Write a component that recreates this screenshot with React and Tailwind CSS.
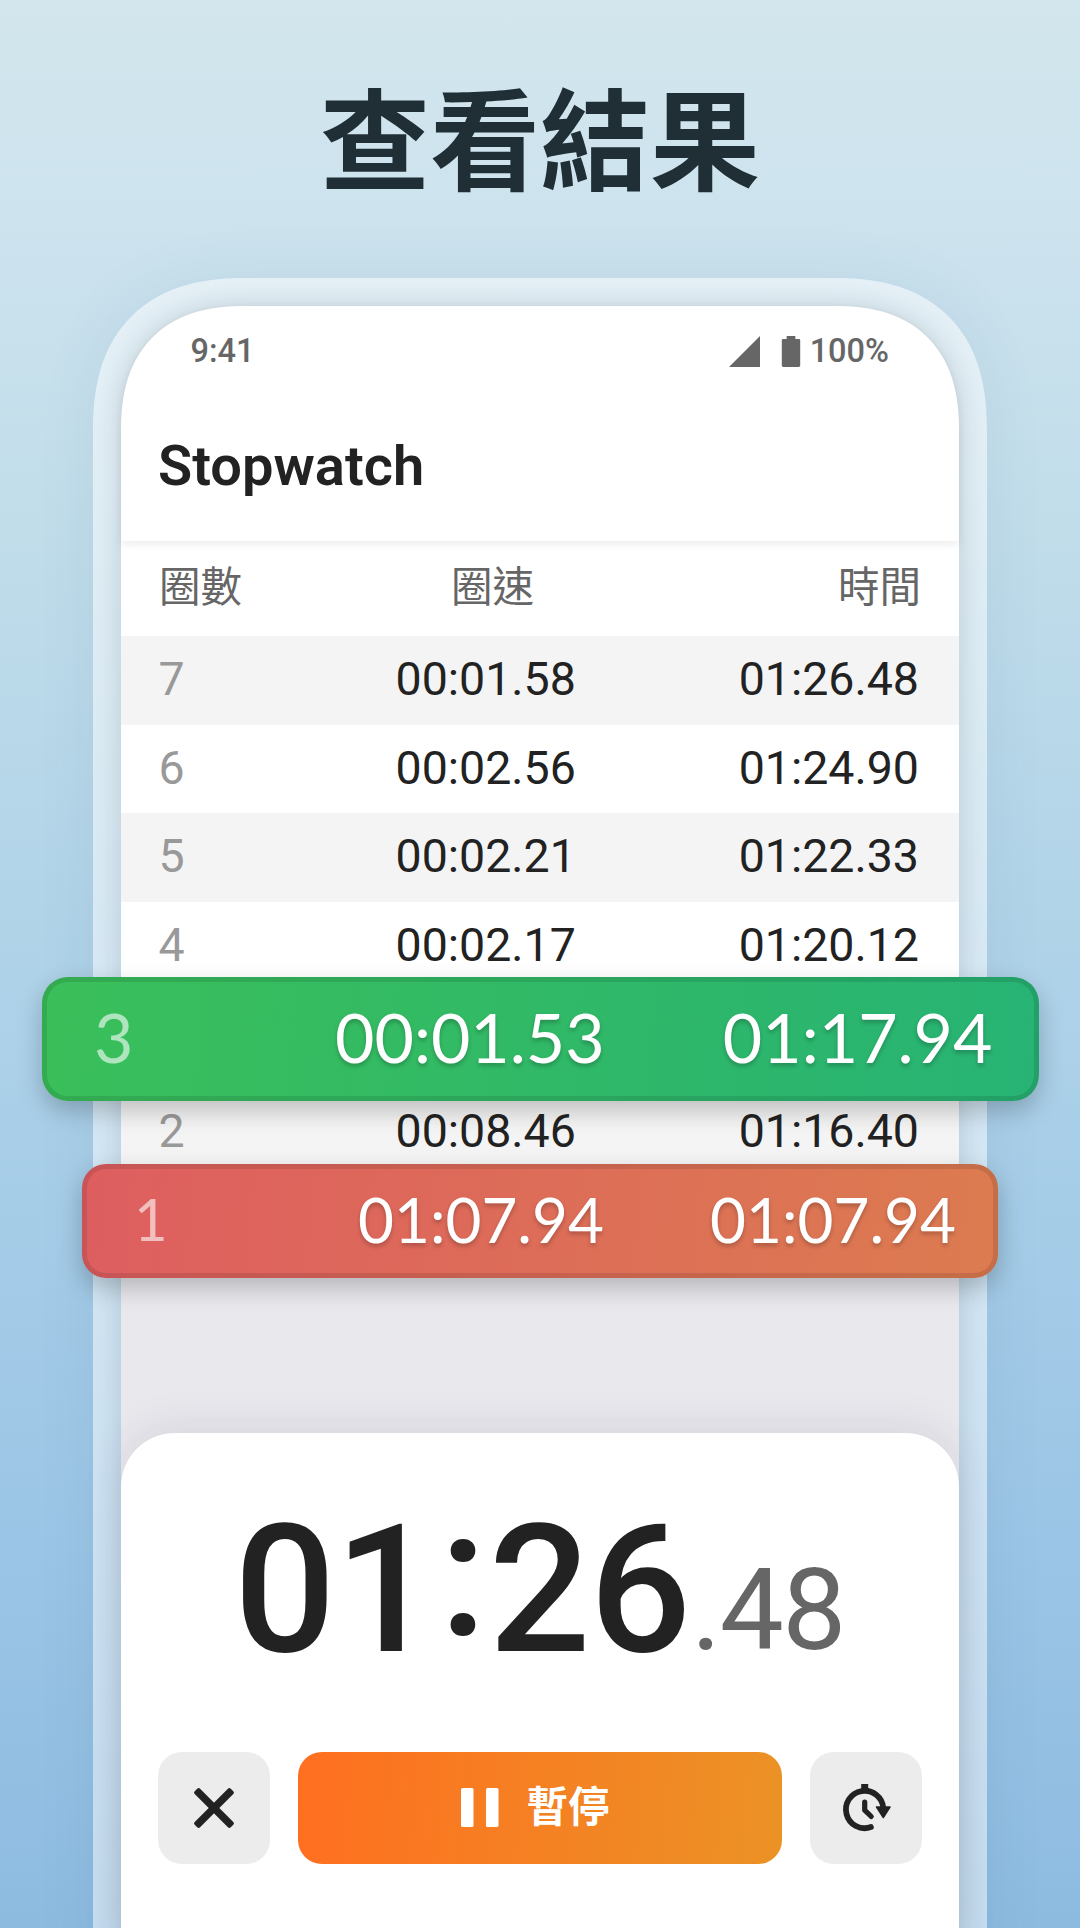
const laps = [
  { lap: "7", pace: "00:01.58", time: "01:26.48", tint: true },
  { lap: "6", pace: "00:02.56", time: "01:24.90", tint: false },
  { lap: "5", pace: "00:02.21", time: "01:22.33", tint: true },
  { lap: "4", pace: "00:02.17", time: "01:20.12", tint: false },
];

function LapRow({ lap, pace, time, tint }) {
  return (
    <div
      className={`flex h-[88.5px] items-center pb-[2px] pl-[37.500px] pr-[40px] text-[46.500px] leading-none text-[#222] ${
        tint ? "bg-[#f4f4f4]" : "bg-white"
      }`}
    >
      <span className="w-[237px] text-[#999]">{lap}</span>
      <span>{pace}</span>
      <span className="ml-auto">{time}</span>
    </div>
  );
}

function StatusBar() {
  return (
    <div className="flex h-[90px] items-center pl-[69.500px] pr-[70px] text-[32.500px] font-medium leading-none text-[#666]">
      <span className="pt-px">9:41</span>
      <svg className="ml-auto h-[31px] w-[31px]" viewBox="0 0 32 32" fill="#666">
        <path d="M32 0v32H0z" />
      </svg>
      <svg className="ml-[21px] h-[31px] w-5" viewBox="0 0 20 32" fill="#666">
        <path d="M5.500 0h9v3H18a1.500 1.500 0 0 1 1.500 1.500v26A1.500 1.500 0 0 1 18 32H2a1.500 1.500 0 0 1-1.500-1.500v-26A1.500 1.500 0 0 1 2 3h3.500z" />
      </svg>
      <span className="ml-[9px] pt-px">100%</span>
    </div>
  );
}

export default function App() {
  return (
    <div className="flex h-[1928px] w-[1080px] flex-col items-center overflow-hidden bg-[linear-gradient(180deg,#d3e6ed_0%,#cbe2ee_14%,#c1ddea_27%,#a9cfe8_58%,#9bc5e6_80%,#8dbbe0_100%)] font-[Roboto,'Noto_Sans_CJK_TC',sans-serif]">
      <h1 className="flex h-[278px] shrink-0 items-start pt-[65px] text-[110px] font-bold leading-[160px] text-[#202f36]">
        查看結果
      </h1>

      <div className="h-[1700px] w-[894px] shrink-0 rounded-t-[153px] bg-[#ffffff80] p-[28px] shadow-[0_0_60px_rgba(40,80,120,0.08)] [corner-shape:superellipse(1.26)]">
        <div className="flex h-full flex-col rounded-t-[125px] bg-[#e8e8ed] shadow-[0_0_28px_rgba(60,80,100,0.22)] [corner-shape:superellipse(1.26)]">
          <div className="relative h-[235px] shrink-0 rounded-t-[125px] bg-white shadow-[0_3px_8px_rgba(0,0,0,0.08)] [corner-shape:superellipse(1.26)]">
            <StatusBar />
            <div className="pl-[37px] pt-[37px] text-[56px] font-semibold leading-[66px] text-[#222]">
              Stopwatch
            </div>
          </div>

          <div className="flex h-[95px] shrink-0 items-center bg-white pb-[2px] pl-[38px] pr-[38px] text-[41.500px] leading-none text-[#666]">
            <span className="w-[292px]">圈數</span>
            <span>圈速</span>
            <span className="ml-auto">時間</span>
          </div>

          {laps.map((l) => (
            <LapRow key={l.lap} {...l} />
          ))}

          <div className="relative z-10 -mx-[79.500px] -mt-[13.500px] flex h-[124.500px] shrink-0 items-center rounded-[26px] border-[5px] border-black/10 bg-[linear-gradient(95deg,#3abf5a,#27b374)] bg-origin-border pb-[3px] pl-[47.500px] pr-[41px] font-[Lato,sans-serif] text-[68px] leading-none text-white shadow-[0_10px_24px_rgba(0,0,0,0.22)]">
            <span className="w-[241px] text-white/60">3</span>
            <span className="[text-shadow:0_3px_4px_rgba(0,0,0,0.22)]">00:01.53</span>
            <span className="ml-auto [text-shadow:0_3px_4px_rgba(0,0,0,0.22)]">01:17.94</span>
          </div>

          <div className="-mt-[13px] shrink-0">
            <LapRow lap="2" pace="00:08.46" time="01:16.40" tint />
          </div>

          <div className="relative z-10 -mx-[39px] -mt-[12.500px] flex h-[114px] shrink-0 items-center rounded-[24px] border-[5px] border-black/10 bg-[linear-gradient(95deg,#de5e60,#dc7b50)] bg-origin-border pb-[5px] pl-[47px] pr-[37px] font-[Lato,sans-serif] text-[62px] leading-none text-white shadow-[0_10px_24px_rgba(0,0,0,0.22)]">
            <span className="w-[224px] text-[58px] text-white/60">1</span>
            <span className="[text-shadow:0_3px_4px_rgba(0,0,0,0.22)]">01:07.94</span>
            <span className="ml-auto [text-shadow:0_3px_4px_rgba(0,0,0,0.22)]">01:07.94</span>
          </div>

          <div className="mt-[155px] flex-1 rounded-t-[54px] bg-white shadow-[0_-6px_40px_rgba(60,50,80,0.10)]">
            <div className="flex h-[318.500px] items-baseline pl-[113px] pt-[62px] text-[179px] font-medium leading-[190px] tracking-[-1px] text-[#222]">
              <span>01</span>
              <span className="relative -top-[16px] ml-[4px] mr-[3px]">:</span>
              <span>26</span>
              <span className="relative -top-[2px] ml-[1px] text-[114px] font-normal tracking-[-1.500px] text-[#666]">.48</span>
            </div>
            <div className="flex h-[112px] gap-[28px] pl-[37px] pr-[37px]">
              <button className="flex w-[112px] items-center justify-center rounded-[24px] bg-[#ececec]">
                <svg className="h-[44px] w-[44px]" viewBox="0 0 44 44" fill="#222">
                  <rect x="-3.500" y="18.200" width="51" height="7.600" rx="2" transform="rotate(45 22 22)" />
                  <rect x="-3.500" y="18.200" width="51" height="7.600" rx="2" transform="rotate(-45 22 22)" />
                </svg>
              </button>
              <button className="flex flex-1 items-center justify-center gap-[27px] rounded-[24px] bg-[linear-gradient(95deg,#ff6f20,#eb9225)] pr-[9px] text-[41.500px] font-bold leading-none text-white">
                <svg className="h-[39px] w-[38px]" viewBox="0 0 38 39" fill="#fff">
                  <rect width="12.500" height="39" rx="1.500" />
                  <rect x="25" width="12.500" height="39" rx="1.500" />
                </svg>
                <span>暫停</span>
              </button>
              <button className="flex w-[112px] items-center justify-center rounded-[24px] bg-[#ececec]">
                <svg className="h-[112px] w-[112px]" viewBox="0 0 112 112" fill="none" stroke="#222" strokeLinecap="round" strokeLinejoin="round">
                  <path d="M60.900 75.100A18.700 18.700 0 1 1 73.300 56" strokeWidth="5.800" />
                  <path d="M54.700 50v8.200l6.500 6.300" strokeWidth="5.200" />
                  <path d="M51.200 32h7v6h-7z" fill="#222" stroke="none" />
                  <path d="M66.500 55h13.500l-6.700 10.500z" fill="#222" strokeWidth="1.500" />
                </svg>
              </button>
            </div>
          </div>
        </div>
      </div>
    </div>
  );
}
